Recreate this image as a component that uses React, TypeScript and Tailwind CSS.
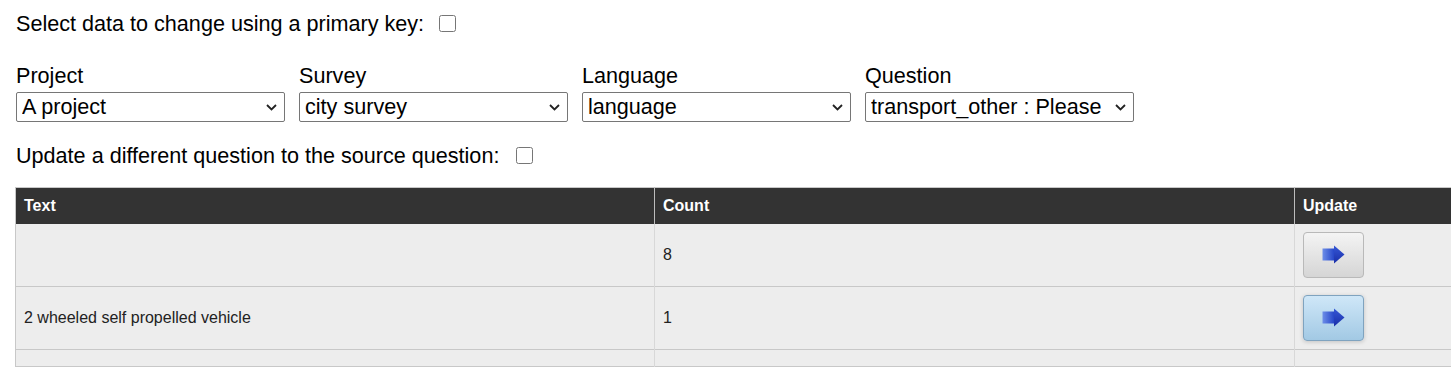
import React from 'react';

const SELECTS = [
    { label: 'Project', value: 'A project' },
    { label: 'Survey', value: 'city survey' },
    { label: 'Language', value: 'language' },
    { label: 'Question', value: 'transport_other : Please specify' },
];

const ROWS = [
    { text: '', count: '8', active: false },
    { text: '2 wheeled self propelled vehicle', count: '1', active: true },
];

function ArrowIcon() {
    return (
        <svg width="23" height="19" viewBox="0 0 23 19">
            <defs>
                <linearGradient id="arrowShaft" x1="0" y1="0" x2="1" y2="0">
                    <stop offset="0" stopColor="#6d8ee8" />
                    <stop offset="1" stopColor="#2747c9" />
                </linearGradient>
                <linearGradient id="arrowHead" x1="0" y1="0" x2="0" y2="1">
                    <stop offset="0" stopColor="#3557d6" />
                    <stop offset="1" stopColor="#1a2fa8" />
                </linearGradient>
            </defs>
            <path d="M0.5 3.5 H12 V15.5 H0.5 Z" fill="url(#arrowShaft)" />
            <path d="M12 0.5 L22.5 9.5 L12 18.5 Z" fill="url(#arrowHead)" />
        </svg>
    );
}

function Dropdown({ label, value }: { label: string; value: string }) {
    return (
        <div className="flex flex-col w-[269px]">
            <label className="text-[21.6px] leading-[25px] text-black">{label}</label>
            <div className="relative mt-[4px]">
                <select
                    defaultValue={value}
                    className="appearance-none w-full h-[30px] bg-white border border-[#767676] rounded-[2px] pl-[5px] pr-[26px] text-[21.6px] leading-[26px] text-black outline-none"
                >
                    <option>{value}</option>
                </select>
                <svg
                    className="absolute right-[8px] top-[12px] pointer-events-none"
                    width="11"
                    height="7"
                    viewBox="0 0 11 7"
                >
                    <path d="M1 1 L5.5 5.5 L10 1" fill="none" stroke="#222" strokeWidth="1.8" />
                </svg>
            </div>
        </div>
    );
}

export default function App() {
    return (
        <div className="w-full overflow-hidden bg-white" style={{ fontFamily: '"Liberation Sans", Arial, sans-serif' }}>
            <div className="pt-[11px] pl-[16px] pb-[24px]">
                {/* Primary key toggle */}
                <div className="flex items-center h-[25px]">
                    <span className="text-[21.6px] leading-[25px] text-black">Select data to change using a primary key:</span>
                    <input type="checkbox" className="ml-[15px] w-[17px] h-[17px] m-0" />
                </div>

                {/* Selectors */}
                <div className="flex gap-[14px] mt-[27px]">
                    {SELECTS.map(s => (
                        <Dropdown key={s.label} label={s.label} value={s.value} />
                    ))}
                </div>

                <div className="flex items-center h-[25px] mt-[21px]">
                    <span className="text-[21.6px] leading-[25px] text-black">Update a different question to the source question:</span>
                    <input type="checkbox" className="ml-[17px] w-[17px] h-[17px] m-0" />
                </div>

                {/* Results */}
                <table className="mt-[19px] -ml-[1px] table-fixed w-[1919px] border-collapse border border-[#c8c8c8] text-[16px]">
                    <thead>
                        <tr className="bg-[#333333] text-white">
                            <th className="w-[639px] h-[36px] px-[8px] text-left font-bold border-r border-[#bdbdbd]">Text</th>
                            <th className="w-[640px] h-[36px] px-[8px] text-left font-bold border-r border-[#bdbdbd]">Count</th>
                            <th className="h-[36px] px-[8px] text-left font-bold">Update</th>
                        </tr>
                    </thead>
                    <tbody>
                        {ROWS.map((row, i) => (
                            <tr key={i} className="bg-[#ededed] border-b border-[#c8c8c8]">
                                <td className="px-[8px] py-[8px] text-[#222] border-r border-[#d8d8d8]">{row.text}</td>
                                <td className="px-[8px] py-[8px] text-[#222] border-r border-[#d8d8d8]">{row.count}</td>
                                <td className="px-[8px] py-[8px]">
                                    <button
                                        className={
                                            row.active
                                                ? 'flex items-center justify-center w-[61px] h-[46px] rounded-[4px] border border-[#7fa3bf] bg-gradient-to-b from-[#cfe7f8] to-[#a2c9e4] shadow-[0_1px_4px_rgba(0,0,0,0.18)]'
                                                : 'flex items-center justify-center w-[61px] h-[46px] rounded-[4px] border border-[#b9b9b9] bg-gradient-to-b from-[#f4f4f4] to-[#d5d5d5]'
                                        }
                                    >
                                        <ArrowIcon />
                                    </button>
                                </td>
                            </tr>
                        ))}
                        <tr className="bg-[#ededed]">
                            <td className="px-[8px] py-[8px] border-r border-[#d8d8d8]"></td>
                            <td className="px-[8px] py-[8px] border-r border-[#d8d8d8]"></td>
                            <td className="px-[8px] py-[8px]"></td>
                        </tr>
                    </tbody>
                </table>
            </div>
        </div>
    );
}
